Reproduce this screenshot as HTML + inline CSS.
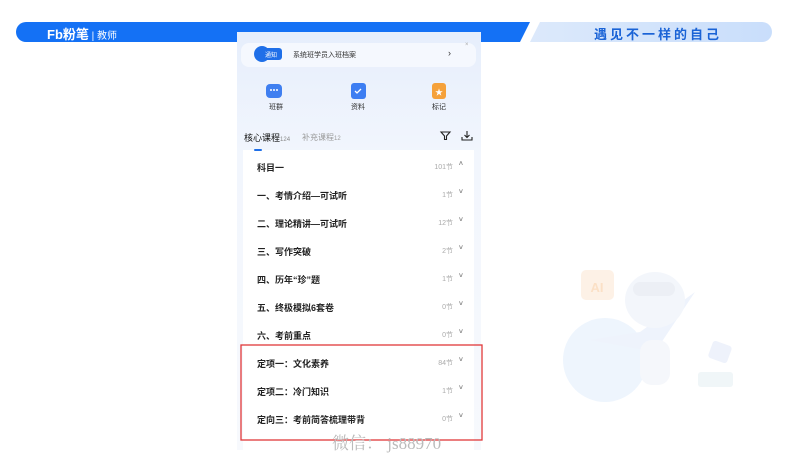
<!DOCTYPE html>
<html><head><meta charset="utf-8"><style>
body{margin:0;width:800px;height:450px;overflow:hidden;background:#fff;position:relative;font-family:"Liberation Sans","Noto Sans CJK SC",sans-serif}
.abs{position:absolute}
.row{position:absolute;left:257px;width:210px;font-size:9px;font-weight:bold;color:#222;height:12px}
.row .n{position:absolute;right:14px;top:1px;font-size:7px;font-weight:normal;color:#aaa}
.row .c{position:absolute;right:4px;top:0;font-size:7px;color:#888}
</style></head><body>
<svg class="abs" style="left:0;top:0" width="800" height="450">
<defs><linearGradient id="g" x1="0" x2="1"><stop offset="0" stop-color="#dce9fb"/><stop offset="1" stop-color="#c9defb"/></linearGradient>
<linearGradient id="p" x1="0" y1="0" x2="0" y2="1"><stop offset="0" stop-color="#e6eefc"/><stop offset="0.3" stop-color="#f2f6fd"/><stop offset="1" stop-color="#f7f9fd"/></linearGradient></defs>
<path d="M26 22 H530 L520 42 H26 A10 10 0 0 1 26 22Z" fill="#1471f5"/>
<path d="M540 22 H762 A10 10 0 0 1 762 42 H530Z" fill="url(#g)"/>
<rect x="237" y="32" width="244" height="418" fill="url(#p)"/>
<rect x="243" y="150" width="231" height="300" fill="#fff"/>
<rect x="241" y="43" width="235" height="24" rx="8" fill="#f5f8fe"/>
<rect x="241" y="345" width="241" height="95" fill="none" stroke="#e0383a" stroke-width="1.3"/>
<circle cx="605" cy="360" r="42" fill="#eef5fd"/>
<path d="M590 340 l50 -8 55 -40 l-40 60z" fill="#eef3fc"/>
<ellipse cx="655" cy="300" rx="30" ry="28" fill="#f3f6fb"/>
<rect x="633" y="282" width="42" height="14" rx="7" fill="#eceff5"/>
<rect x="640" y="340" width="30" height="45" rx="12" fill="#f5f7fb"/>
<rect x="581" y="270" width="33" height="30" rx="5" fill="#fdf1e6"/>
<text x="597" y="292" font-size="13" fill="#fbe0c6" text-anchor="middle" font-weight="bold">AI</text>
<rect x="710" y="343" width="20" height="18" rx="3" fill="#eef2fb" transform="rotate(20 720 352)"/>
<rect x="698" y="372" width="35" height="15" rx="3" fill="#f0f6f8"/>
<circle cx="262" cy="54" r="8" fill="#1f6fe8"/>
<rect x="264" y="48" width="18" height="12" rx="3" fill="#1f6fe8"/>
<rect x="266" y="84" width="16" height="14" rx="4" fill="#3f7ff0"/>
<circle cx="271" cy="90" r="1" fill="#fff"/><circle cx="274" cy="90" r="1" fill="#fff"/><circle cx="277" cy="90" r="1" fill="#fff"/>
<rect x="351" y="83" width="15" height="16" rx="3" fill="#3d7ef2"/>
<path d="M355 91 l2 2 4-4" stroke="#fff" fill="none" stroke-width="1.3"/>
<rect x="432" y="83" width="14" height="16" rx="3" fill="#f5a13a"/>
<text x="439" y="95" font-size="8" fill="#fff" text-anchor="middle">★</text>
<rect x="254" y="149" width="8" height="2" rx="1" fill="#1f6fe8"/>
<path d="M441 132 h9 l-3.5 4 v3.5 l-2 0 v-3.5z" stroke="#222" fill="none" stroke-width="1.1"/>
<path d="M467 131 v6 M464.5 135 l2.5 2.5 2.5-2.5 M462 137 v3 h10 v-3" stroke="#222" fill="none" stroke-width="1.1"/>
</svg>
<div class="abs" style="left:47px;top:24px;font-size:13px;font-weight:bold;color:#fff">Fb粉笔<span style="font-size:10px;font-weight:normal"> | 教师</span></div>
<div class="abs" style="left:594px;top:24px;font-size:13px;font-weight:bold;color:#1a63d6;letter-spacing:3px">遇见不一样的自己</div>
<div class="abs" style="left:265px;top:50px;font-size:6px;color:#fff">通知</div>
<div class="abs" style="left:293px;top:50px;font-size:7px;color:#333">系统班学员入班档案</div>
<div class="abs" style="left:448px;top:48px;font-size:9px;color:#333">›</div>
<div class="abs" style="left:465px;top:42px;font-size:6px;color:#aaa">×</div>
<div class="abs" style="left:269px;top:102px;font-size:7px;color:#333">班群</div>
<div class="abs" style="left:351px;top:102px;font-size:7px;color:#333">资料</div>
<div class="abs" style="left:432px;top:102px;font-size:7px;color:#333">标记</div>
<div class="abs" style="left:244px;top:131px;font-size:9px;color:#111">核心课程<span style="font-size:6px;color:#888">124</span></div>
<div class="abs" style="left:302px;top:132px;font-size:8px;color:#999">补充课程<span style="font-size:6px">12</span></div>
<div class="row" style="top:161px">科目一<span class="n">101节</span><span class="c">˄</span></div>
<div class="row" style="top:189px">一、考情介绍—可试听<span class="n">1节</span><span class="c">˅</span></div>
<div class="row" style="top:217px">二、理论精讲—可试听<span class="n">12节</span><span class="c">˅</span></div>
<div class="row" style="top:245px">三、写作突破<span class="n">2节</span><span class="c">˅</span></div>
<div class="row" style="top:273px">四、历年“珍”题<span class="n">1节</span><span class="c">˅</span></div>
<div class="row" style="top:301px">五、终极模拟6套卷<span class="n">0节</span><span class="c">˅</span></div>
<div class="row" style="top:329px">六、考前重点<span class="n">0节</span><span class="c">˅</span></div>
<div class="row" style="top:357px">定项一：文化素养<span class="n">84节</span><span class="c">˅</span></div>
<div class="row" style="top:385px">定项二：冷门知识<span class="n">1节</span><span class="c">˅</span></div>
<div class="row" style="top:413px">定向三：考前简答梳理带背<span class="n">0节</span><span class="c">˅</span></div>
<div class="abs" style="left:332px;top:429px;font-size:17px;color:#bbb;font-family:'Liberation Serif','Noto Serif CJK SC',serif">微信：  js88970</div>
</body></html>
